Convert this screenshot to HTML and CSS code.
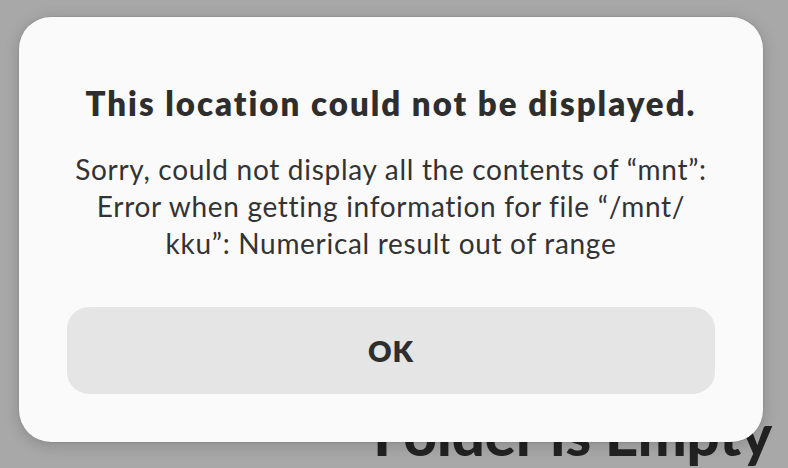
FILE: index.html
```html
<!DOCTYPE html>
<html lang="en">
<head>
<meta charset="utf-8">
<title>This location could not be displayed</title>
<link rel="stylesheet" href="styles.css">
</head>
<body>
<div class="page">
  <div class="empty-state">
    <h1 class="empty-title">Folder is Empty</h1>
  </div>
  <div class="dialog" role="alertdialog">
    <h2 class="dialog-title">This location could not be displayed.</h2>
    <p class="dialog-body">Sorry, could not display all the contents of “mnt”:<br>Error when getting information for file “/mnt/<br>kku”: Numerical result out of range</p>
    <button class="dialog-button" type="button">OK</button>
  </div>
</div>
</body>
</html>
```

FILE: styles.css
```css
* { box-sizing: border-box; }
html, body { margin: 0; padding: 0; }
body {
  background: #a8a8a8;
  font-family: "Lato", "Noto Sans", sans-serif;
  color: #2e2e2e;
}
.page {
  position: relative;
  width: 788px;
  height: 468px;
  overflow: hidden;
  display: flex;
  justify-content: flex-end;
  align-items: flex-end;
}
.empty-state {
  padding: 0 16px 0 0;
  margin-bottom: 4px;
}
.empty-title {
  margin: 0;
  font-size: 58px;
  font-weight: 900;
  line-height: 60px;
  letter-spacing: 0;
  color: #222222;
}
.dialog {
  position: absolute;
  left: 19px;
  top: 17px;
  width: 744px;
  height: 425px;
  background: #fafafa;
  border-radius: 32px;
  box-shadow: 0 0 0 1px rgba(0,0,0,0.05), 0 3px 16px rgba(0,0,0,0.18);
  padding: 66px 48px 48px;
  display: flex;
  flex-direction: column;
  align-items: stretch;
}
.dialog-title {
  margin: 0;
  text-align: center;
  font-size: 33px;
  font-weight: 800;
  line-height: 40px;
  letter-spacing: 2px;
  color: #2e2e2e;
}
.dialog-body {
  margin: 28px 0 0;
  text-align: center;
  font-size: 28px;
  font-weight: 400;
  line-height: 37px;
  letter-spacing: 0.7px;
  color: #333333;
}
.dialog-button {
  margin-top: auto;
  height: 87px;
  border: none;
  border-radius: 22px;
  background: #e5e5e5;
  font-family: "Lato", "Noto Sans", sans-serif;
  font-size: 29px;
  font-weight: 800;
  letter-spacing: 1px;
  color: #2e2e2e;
}
```
